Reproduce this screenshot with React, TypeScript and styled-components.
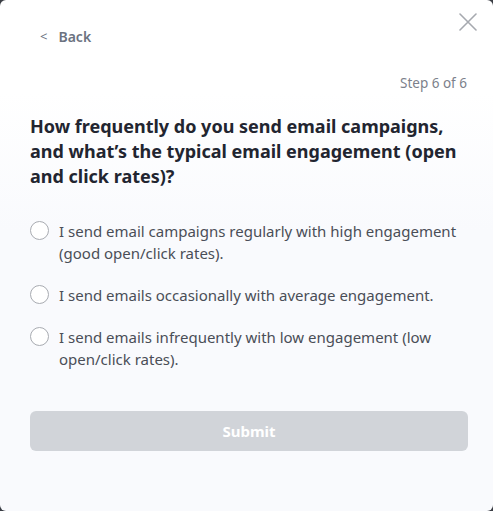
import React, { useState } from 'react'
import styled, { createGlobalStyle } from 'styled-components'

const GlobalStyle = createGlobalStyle`
  html, body {
    margin: 0;
    padding: 0;
    background: #3a3d44;
  }
  * {
    box-sizing: border-box;
  }
`

const options = [
  'I send email campaigns regularly with high engagement (good open/click rates).',
  'I send emails occasionally with average engagement.',
  'I send emails infrequently with low engagement (low open/click rates).',
]

const Modal = styled.div`
  position: relative;
  width: 493px;
  height: 511px;
  border-radius: 6px;
  background: linear-gradient(to bottom, #ffffff 0%, #ffffff 18%, #f9fafd 45%, #f9fafd 100%);
  font-family: 'Noto Sans', 'Open Sans', sans-serif;
  padding: 26px 25px 0 30px;
  overflow: hidden;
`

const CloseButton = styled.button`
  position: absolute;
  top: 12px;
  right: 15px;
  width: 20px;
  height: 20px;
  padding: 0;
  border: none;
  background: transparent;
  cursor: pointer;
  display: flex;
  align-items: center;
  justify-content: center;
`

const BackLink = styled.button`
  display: flex;
  align-items: center;
  gap: 11px;
  padding: 0 0 0 10px;
  border: none;
  background: transparent;
  font-family: inherit;
  font-size: 14px;
  font-weight: 600;
  color: #6b7280;
  cursor: pointer;
  height: 20px;
`

const Chevron = styled.span`
  font-weight: 400;
  font-size: 13px;
`

const StepLabel = styled.div`
  margin-top: 28px;
  text-align: right;
  font-size: 13.5px;
  color: #7c818b;
  padding-right: 1px;
`

const Question = styled.h2`
  margin: 22px 0 0;
  font-size: 18px;
  font-weight: 700;
  line-height: 25px;
  color: #222530;
`

const OptionList = styled.div`
  display: flex;
  flex-direction: column;
  gap: 20px;
  margin-top: 31px;
`

const OptionRow = styled.label`
  display: flex;
  align-items: flex-start;
  gap: 10px;
  cursor: pointer;
`

const Radio = styled.span<{ $checked: boolean }>`
  flex: none;
  width: 19px;
  height: 19px;
  margin-top: 1px;
  border-radius: 50%;
  border: 1.5px solid ${({ $checked }) => ($checked ? '#4f46e5' : '#a8abb1')};
  background: ${({ $checked }) => ($checked ? '#4f46e5' : '#ffffff')};
  box-shadow: ${({ $checked }) => ($checked ? 'inset 0 0 0 4px #ffffff' : 'none')};
`

const OptionText = styled.span`
  font-size: 15px;
  line-height: 22px;
  color: #4a4e57;
`

const SubmitButton = styled.button`
  display: block;
  width: 100%;
  height: 40px;
  margin-top: 41px;
  border: none;
  border-radius: 6px;
  background: #d1d4d9;
  color: #ffffff;
  font-family: inherit;
  font-size: 15px;
  font-weight: 700;
  cursor: not-allowed;
`

const App = () => {
  const [selected, setSelected] = useState<number | null>(null)

  return (
    <>
      <GlobalStyle />
      <Modal>
        <CloseButton aria-label="Close">
          <svg width="18" height="18" viewBox="0 0 18 18" fill="none">
            <path d="M1 1L17 17M17 1L1 17" stroke="#a6a9af" strokeWidth="1.6" strokeLinecap="round" />
          </svg>
        </CloseButton>
        <BackLink>
          <Chevron>&lt;</Chevron> Back
        </BackLink>
        <StepLabel>Step 6 of 6</StepLabel>
        <Question>
          How frequently do you send email campaigns, and what’s the typical email engagement (open and click rates)?
        </Question>
        <OptionList>
          {options.map((text, i) => (
            <OptionRow key={i} onClick={() => setSelected(i)}>
              <Radio $checked={selected === i} />
              <OptionText>{text}</OptionText>
            </OptionRow>
          ))}
        </OptionList>
        <SubmitButton disabled={selected === null}>Submit</SubmitButton>
      </Modal>
    </>
  )
}

export default App
